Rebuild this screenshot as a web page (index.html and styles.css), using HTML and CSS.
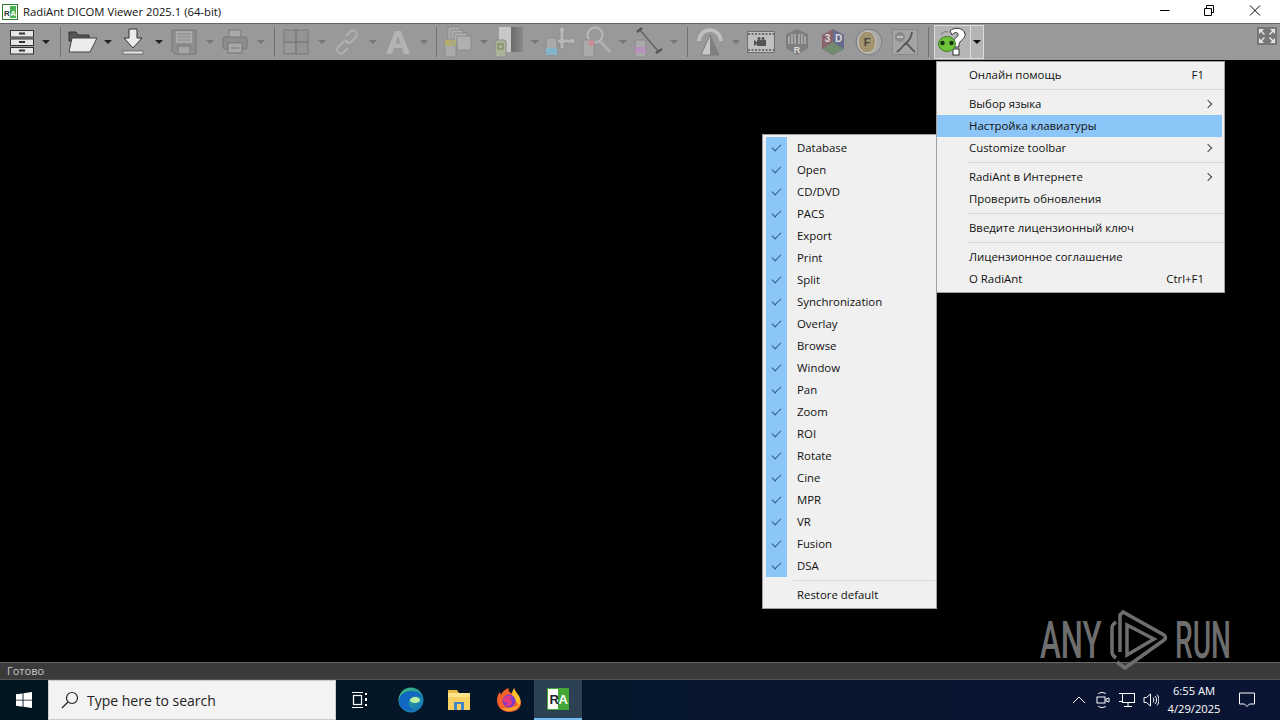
FILE: index.html
```html
<!DOCTYPE html>
<html lang="en">
<head>
    <meta charset="UTF-8">
    <title>RadiAnt DICOM Viewer 2025.1 (64-bit)</title>
    <link rel="stylesheet" href="styles.css">
</head>
<body>
    <div class="titlebar">
        <svg class="app-icon" width="16" height="16" viewBox="0 0 16 16">
            <rect x="0.5" y="0.5" width="15" height="15" fill="#fff" stroke="#2f7d32"/>
            <rect x="8" y="2" width="6" height="12" fill="#4caf50"/>
            <text x="2" y="11.5" class="ra-r">R</text>
            <text x="8.3" y="11.5" class="ra-a">A</text>
        </svg>
        <span class="title">RadiAnt DICOM Viewer 2025.1 (64-bit)</span>
        <div class="winbtns">
            <svg width="46" height="23" viewBox="0 0 46 23"><path d="M20 10.500h9.500" stroke="#000"/></svg>
            <svg width="46" height="23" viewBox="0 0 46 23"><path d="M20.500 8V5.500h7v7H25.500M18.500 8.500h7v7h-7z" fill="none" stroke="#000"/></svg>
            <svg width="46" height="23" viewBox="0 0 46 23"><path d="M18 5.500l10 10M28 5.500l-10 10" stroke="#000" fill="none"/></svg>
        </div>
    </div>

    <div class="toolbar">
        <button class="tool">
            <svg width="26" height="26" viewBox="0 0 26 26">
                <g fill="#e6e6e6" stroke="#333"><rect x="1.500" y="1.500" width="23" height="6.500"/><rect x="1.500" y="10" width="23" height="6.500"/><rect x="1.500" y="18.500" width="23" height="6.500"/></g>
                <path d="M10 4.500h6M10 13h6M10 21.500h6" stroke="#333" stroke-width="2"/>
            </svg>
        </button>
        <span class="arrow arrow-first"></span>
        <span class="sep sep-first"></span>

        <button class="tool">
            <svg width="32" height="26" viewBox="0 0 32 26">
                <path d="M3 3h7l2 3h11v6H3z" fill="#555" stroke="#333"/>
                <path d="M3 23l3-14h25l-7 14z" fill="#ececec" stroke="#444"/>
            </svg>
        </button>
        <span class="arrow"></span>
        <button class="tool">
            <svg width="22" height="28" viewBox="0 0 22 28">
                <path d="M7 1h8v9h5l-9 10-9-10h5z" fill="#ececec" stroke="#333"/>
                <rect x="1" y="23" width="20" height="3" fill="#e0e0e0" stroke="#444" stroke-width=".6"/>
            </svg>
        </button>
        <span class="arrow"></span>
        <button class="tool off">
            <svg width="26" height="26" viewBox="0 0 26 26">
                <path d="M1 1h24v24H4l-3-3z" fill="#8f8f8f" stroke="#777"/>
                <rect x="5" y="2" width="16" height="12" fill="#a9a9a9"/>
                <path d="M7 5h12M7 8h12M7 11h12" stroke="#888"/>
                <rect x="7" y="17" width="12" height="8" fill="#a5a5a5" stroke="#777"/>
            </svg>
        </button>
        <span class="arrow arrow-off"></span>
        <button class="tool off">
            <svg width="26" height="26" viewBox="0 0 26 26">
                <rect x="7" y="1" width="12" height="8" fill="#aaa" stroke="#777"/>
                <rect x="1" y="8" width="24" height="12" rx="2" fill="#8d8d8d" stroke="#777"/>
                <rect x="6" y="14" width="14" height="10" fill="#a8a8a8" stroke="#777"/>
                <path d="M9 19h8" stroke="#777"/>
            </svg>
        </button>
        <span class="arrow arrow-off"></span>
        <span class="sep"></span>

        <button class="tool off">
            <svg width="26" height="26" viewBox="0 0 26 26">
                <rect x="1" y="1" width="24" height="24" fill="#949494" stroke="#7a7a7a"/>
                <path d="M13 1v24M1 13h24" stroke="#6c6c6c"/>
                <path d="M2 16h10M2 19h10M2 22h10" stroke="#a4a4a4"/>
            </svg>
        </button>
        <span class="arrow arrow-off"></span>
        <button class="tool off">
            <svg width="26" height="26" viewBox="0 0 26 26" fill="none" stroke="#b0b0b0" stroke-width="2">
                <path d="M12 7l4-4a3.500 3.500 0 0 1 6 5l-5 5a3.500 3.500 0 0 1-5 0"/>
                <path d="M14 19l-4 4a3.500 3.500 0 0 1-6-5l5-5a3.500 3.500 0 0 1 5 0"/>
            </svg>
        </button>
        <span class="arrow arrow-off"></span>
        <button class="tool off">
            <svg width="26" height="26" viewBox="0 0 26 26">
                <path d="M1 25L10 2h6l9 23h-6l-2-6H9l-2 6zM10.500 14.500h5L13 7z" fill="#b3b3b3" fill-rule="evenodd"/>
            </svg>
        </button>
        <span class="arrow arrow-off"></span>
        <span class="sep sep-third"></span>

        <button class="tool off">
            <svg width="30" height="32" viewBox="0 0 30 32">
                <g fill="#b0b0b0" stroke="#8a8a8a"><rect x="5" y="1" width="12" height="14"/><rect x="8" y="4" width="12" height="14"/><rect x="11" y="7" width="13" height="14"/><rect x="14" y="10" width="14" height="14"/></g>
                <rect x="2" y="14" width="11" height="17" rx="2" fill="#aaa" stroke="#8a8a8a"/>
                <rect x="2" y="14" width="5.500" height="6" fill="#b5ab6c"/>
                <rect x="7.500" y="14" width="5.500" height="6" fill="#a9ad7a"/>
            </svg>
        </button>
        <span class="arrow arrow-off"></span>
        <button class="tool off">
            <svg width="30" height="32" viewBox="0 0 30 32">
                <defs><linearGradient id="lev"><stop offset="0" stop-color="#c8c8c8"/><stop offset=".5" stop-color="#c8c8c8"/><stop offset=".5" stop-color="#6c6c6c"/><stop offset="1" stop-color="#8a8a8a"/></linearGradient></defs>
                <rect x="5" y="1" width="24" height="25" fill="url(#lev)"/>
                <rect x="1" y="14" width="11" height="17" rx="2" fill="#aab49a" stroke="#8a8a8a"/>
                <rect x="4" y="18" width="5" height="5" fill="none" stroke="#70804f"/>
            </svg>
        </button>
        <span class="arrow arrow-off"></span>
        <button class="tool tool-pan off">
            <svg width="32" height="34" viewBox="0 0 32 34">
                <path d="M17 1l4 5h-2v8h7v-2l5 4-5 4v-2h-7v6h-4v-6h-3v-4h3V6h-2z" fill="#b8b8b8" stroke="#8e8e8e"/>
                <rect x="1" y="13" width="11" height="17" rx="2" fill="#aaa" stroke="#8a8a8a"/>
                <rect x="1" y="23" width="11" height="7" fill="#83b4c8"/>
            </svg>
        </button>
        <button class="tool off">
            <svg width="30" height="32" viewBox="0 0 30 32">
                <circle cx="13" cy="9" r="7.500" fill="none" stroke="#b8b8b8" stroke-width="2"/>
                <path d="M18 15l10 11" stroke="#b0b0b0" stroke-width="3"/>
                <rect x="1" y="14" width="11" height="17" rx="2" fill="#aaa" stroke="#8a8a8a"/>
                <rect x="6.500" y="14" width="5.500" height="6" fill="#c58f97"/>
            </svg>
        </button>
        <span class="arrow arrow-off"></span>
        <button class="tool off">
            <svg width="32" height="32" viewBox="0 0 32 32">
                <path d="M8 4l18 21" stroke="#666" stroke-width="1.600"/>
                <path d="M5 6l5-4M24 27l6-4" stroke="#555" stroke-width="2.400"/>
                <rect x="3" y="14" width="11" height="17" rx="2" fill="#aaa" stroke="#8a8a8a"/>
                <rect x="3" y="21" width="11" height="6" fill="#b590b8"/>
            </svg>
        </button>
        <span class="arrow arrow-off"></span>
        <span class="sep sep-fourth"></span>

        <button class="tool off">
            <svg width="28" height="30" viewBox="0 0 28 30">
                <path d="M3 14A11 11 0 0 1 25 14" fill="none" stroke="#c0c0c0" stroke-width="3.500"/>
                <path d="M14 8L5 28h18z" fill="#c8c8c8" stroke="#7d7d7d"/>
                <path d="M14 8v20h9z" fill="#7f7f7f"/>
            </svg>
        </button>
        <span class="arrow arrow-off"></span>
        <button class="tool off">
            <svg width="28" height="24" viewBox="0 0 28 24">
                <rect x="0.500" y="1.500" width="27" height="21" fill="#c0c0c0" stroke="#6f6f6f"/>
                <path d="M1 4h26M1 20h26" stroke="#6f6f6f" stroke-width="2" stroke-dasharray="2 1.500"/>
                <path d="M7 10l3 2v-2h9v6h-9v-2l-3 2z" fill="#555"/>
                <circle cx="12" cy="8.500" r="1.600" fill="#555"/><circle cx="16" cy="8.500" r="1.600" fill="#555"/>
            </svg>
        </button>
        <button class="tool off">
            <svg width="26" height="28" viewBox="0 0 26 28">
                <path d="M13 1l11 5v14l-11 7-11-7V6z" fill="#7e7e7e"/>
                <path d="M5 8v8M8 6v10M11 6v10M15 6v10M18 6v10M21 8v8" stroke="#b0b0b0" stroke-width="1.600"/>
                <text x="13" y="25" class="icon-r">R</text>
            </svg>
        </button>
        <button class="tool off">
            <svg width="26" height="28" viewBox="0 0 26 28">
                <path d="M13 1L2 7v14l11 6z" fill="#8a6468"/>
                <path d="M13 1l11 6v14l-11 6z" fill="#666a8c"/>
                <path d="M2 21l11-7 11 7-11 6z" fill="#718a70"/>
                <text x="7.500" y="14" class="icon-3d">3</text>
                <text x="18.500" y="14" class="icon-3d">D</text>
            </svg>
        </button>
        <button class="tool off">
            <svg width="28" height="28" viewBox="0 0 28 28">
                <circle cx="14" cy="14" r="13" fill="#a8a8a8" stroke="#7d7d7d"/>
                <ellipse cx="12" cy="14" rx="9" ry="11" fill="#a2946e" stroke="#c8c8c8"/>
                <text x="12" y="18" class="icon-f">F</text>
            </svg>
        </button>
        <button class="tool off">
            <svg width="26" height="26" viewBox="0 0 26 26">
                <rect x="0.500" y="0.500" width="25" height="25" fill="#a4a4a4" stroke="#8a8a8a"/>
                <circle cx="8" cy="8" r="5" fill="#8a8a8a"/>
                <path d="M5 8h6" stroke="#ccc" stroke-width="1.500"/>
                <path d="M20 3c-1 8-4 9-6 11-3 3-5 6-9 9M14 14c3 2 4 5 9 9" fill="none" stroke="#555" stroke-width="1.800"/>
            </svg>
        </button>
        <span class="sep sep-fifth"></span>

        <div class="help">
            <span class="help-icon">
                <svg width="32" height="30" viewBox="0 0 32 30">
                    <path d="M13 4c3-4 14-4 15 3 1 5-6 6-6 11v2h-6v-4c0-5 6-6 5-9-.5-2-4-2-6 1z" fill="#fff" stroke="#333"/>
                    <rect x="16" y="22" width="6" height="6" fill="#fff" stroke="#333"/>
                    <path d="M4 8c1-3 4-4 7-3" fill="none" stroke="#777"/>
                    <ellipse cx="10" cy="17" rx="8.500" ry="7.500" fill="#6fc23a" stroke="#3f7d22"/>
                    <circle cx="5.500" cy="16" r="2.200" fill="#16330d"/>
                    <circle cx="14.500" cy="16" r="2.200" fill="#16330d"/>
                </svg>
            </span>
            <span class="help-arrow"></span>
        </div>

        <button class="fullscreen">
            <svg width="20" height="18" viewBox="0 0 20 18">
                <rect width="20" height="18" fill="#777"/>
                <path d="M2 2h5L5 4l3 3-1 1-3-3-2 2zM18 2v5l-2-2-3 3-1-1 3-3-2-2zM2 16v-5l2 2 3-3 1 1-3 3 2 2zM18 16h-5l2-2-3-3 1-1 3 3 2-2z" fill="#e4e4e4"/>
            </svg>
        </button>
    </div>

    <div class="viewport">
        <ul class="menu menu-toolbar">
            <li class="check">Database</li>
            <li class="check">Open</li>
            <li class="check">CD/DVD</li>
            <li class="check">PACS</li>
            <li class="check">Export</li>
            <li class="check">Print</li>
            <li class="check">Split</li>
            <li class="check">Synchronization</li>
            <li class="check">Overlay</li>
            <li class="check">Browse</li>
            <li class="check">Window</li>
            <li class="check">Pan</li>
            <li class="check">Zoom</li>
            <li class="check">ROI</li>
            <li class="check">Rotate</li>
            <li class="check">Cine</li>
            <li class="check">MPR</li>
            <li class="check">VR</li>
            <li class="check">Fusion</li>
            <li class="check">DSA</li>
            <li class="divider"></li>
            <li>Restore default</li>
        </ul>

        <ul class="menu menu-help">
            <li>Онлайн помощь<span class="key">F1</span></li>
            <li class="divider"></li>
            <li class="sub">Выбор языка</li>
            <li class="active">Настройка клавиатуры</li>
            <li class="sub">Customize toolbar</li>
            <li class="divider"></li>
            <li class="sub">RadiAnt в Интернете</li>
            <li>Проверить обновления</li>
            <li class="divider"></li>
            <li>Введите лицензионный ключ</li>
            <li class="divider"></li>
            <li>Лицензионное соглашение</li>
            <li>О RadiAnt<span class="key">Ctrl+F1</span></li>
        </ul>

        <div class="watermark">
            <span class="wm-text">ANY</span>
            <svg class="wm-logo" width="60" height="62" viewBox="0 0 60 62" fill="none" stroke="#6e6e6e" stroke-width="3.500">
                <path d="M8 13c-3 2-4 4-4 6v24c0 3 1 4 4 6"/>
                <path d="M12 43V6l3-3 41 23q3 3 0 5L17 59l-8-6"/>
                <path d="M19 16l27 14-27 16z"/>
            </svg>
            <span class="wm-text wm-run">RUN</span>
        </div>
    </div>

    <div class="statusbar">Готово</div>

    <div class="taskbar">
        <div class="start">
            <svg width="16" height="16" viewBox="0 0 18 18" fill="#fff"><path d="M0 2.600l7.400-1v7H0zM8.400 1.400L18 0v8.600H8.400zM0 9.500h7.400v7L0 15.400zM8.400 9.500H18V18l-9.600-1.400z"/></svg>
        </div>
        <div class="search">
            <svg width="18" height="18" viewBox="0 0 18 18" fill="none" stroke="#222" stroke-width="1.200"><circle cx="11" cy="7" r="5.500"/><path d="M7 11l-6 6"/></svg>
            <span>Type here to search</span>
        </div>
        <div class="task task-view">
            <svg width="16" height="18" viewBox="0 0 16 18" fill="none" stroke="#fff" stroke-width="1.200"><path d="M0 1.500h11M0 16.500h11"/><rect x="1.500" y="4.500" width="8" height="9"/><path d="M14 2v2M14 7v3M14 13v2" stroke-width="2"/></svg>
        </div>
        <div class="task">
            <svg width="26" height="26" viewBox="0 0 26 26">
                <defs><linearGradient id="edge" x1="0" y1="0" x2="1" y2="1"><stop offset="0" stop-color="#3ec47a"/><stop offset="1" stop-color="#0d6bc4"/></linearGradient></defs>
                <circle cx="13" cy="13" r="12.500" fill="url(#edge)"/>
                <path d="M1 15C1 6 8 4 14 4c6 0 10 4 11 8-3-3-9-4-13 0-3 3-1 9 4 11-2 2-15 1-15-8z" fill="#1268c0"/>
                <ellipse cx="17" cy="13" rx="5" ry="3" fill="#bdf0a5"/>
            </svg>
        </div>
        <div class="task">
            <svg width="24" height="22" viewBox="0 0 24 22">
                <path d="M1 1h9l2 3h11v17H1z" fill="#e9b949"/>
                <rect x="1" y="4" width="22" height="4" fill="#fde48a"/>
                <rect x="1" y="8" width="22" height="13" fill="#f8d165"/>
                <rect x="7" y="13" width="10" height="8" fill="#3f86c9"/>
                <rect x="10" y="15" width="4" height="6" fill="#f8d165"/>
            </svg>
        </div>
        <div class="task task-fox">
            <svg width="26" height="26" viewBox="0 0 26 26">
                <path d="M13 25C6 25 1 20 1 13c0-3 1-6 3-8l1 3c1-3 4-6 8-7-1 2 0 4 2 5 4 1 7 3 8 5 1 1 2 3 2 5 0 5-5 9-12 9z" fill="#f4622c"/>
                <path d="M18 1c1 3 3 5 5 8 2 3 2 7 0 10-2-4-6-8-7-12 0-2 1-4 2-6z" fill="#ffc02e"/>
                <path d="M6 21c2 3 8 4 12 2 3-1 5-4 6-7-3 4-11 6-18 5z" fill="#ffa22e"/>
                <circle cx="13" cy="14" r="6.500" fill="#7d3bc7"/>
                <path d="M7 12c2-3 6-4 9-2l-3 2c2 0 4 2 3 4-1 3-5 4-8 2 2 0 4-1 4-2-3 0-5-2-5-4z" fill="#e4387f"/>
            </svg>
        </div>
        <div class="task task-active">
            <svg width="22" height="22" viewBox="0 0 22 22">
                <rect width="22" height="22" fill="#fff"/>
                <rect x="11" y="0" width="11" height="22" fill="#43a838"/>
                <rect width="22" height="22" fill="none" stroke="#43a838" stroke-width="2"/>
                <text x="2.500" y="16" class="ra-big">R</text>
                <text x="11.500" y="16" class="ra-big ra-big-a">A</text>
            </svg>
        </div>

        <div class="tray">
            <svg width="16" height="8" viewBox="0 0 14 8" fill="none" stroke="#fff"><path d="M1 7l6-6 6 6"/></svg>
            <svg width="16" height="18" viewBox="0 0 14 18" fill="none" stroke="#fff"><path d="M2 3c2-2 6-2 8 0M2 15c2 2 6 2 8 0"/><rect x="1" y="6" width="8" height="6"/><path d="M10 8l3-1v4l-3-1z"/></svg>
            <svg width="16" height="14" viewBox="0 0 16 14" fill="none" stroke="#fff"><rect x="3.500" y=".5" width="12" height="9"/><path d="M0 .5h3.500v8H0M9 10v3M5 13.500h8"/></svg>
            <svg width="16" height="14" viewBox="0 0 16 14" fill="none" stroke="#fff"><path d="M1 4.500h2.500l4-3.500v12l-4-3.500H1zM10 4.500c1 1.500 1 3.500 0 5M12 3c2 2 2 6 0 8M14 1.500c2.500 3 2.500 8 0 11"/></svg>
        </div>
        <div class="clock">
            <span>6:55 AM</span>
            <span>4/29/2025</span>
        </div>
        <div class="notify">
            <svg width="16" height="16" viewBox="0 0 16 16" fill="none" stroke="#fff"><path d="M.5 1h15v11h-5l-2.500 2.500L5.500 12h-5z"/></svg>
        </div>
    </div>
</body>
</html>
```

FILE: styles.css
```css
* {
    box-sizing: border-box;
}
body {
    margin: 0;
    height: 720px;
    overflow: hidden;
    display: flex;
    flex-direction: column;
    font-family: "Open Sans", "Noto Sans", sans-serif;
    background: #000;
}

/* title bar */
.titlebar {
    height: 23px;
    flex: none;
    background: #fff;
    display: flex;
    align-items: center;
    padding-left: 2px;
}
.app-icon {
    flex: none;
}
.ra-r, .ra-a {
    font: bold 8px "Liberation Sans", sans-serif;
}
.ra-r {
    fill: #333;
}
.ra-a {
    fill: #fff;
}
.title {
    margin-left: 5px;
    font-size: 11.300px;
    color: #111;
}
.winbtns {
    margin-left: auto;
    margin-right: 2px;
    display: flex;
}

/* toolbar */
.toolbar {
    height: 37px;
    flex: none;
    background: #999;
    border-top: 1px solid #666;
    display: flex;
    align-items: center;
    padding-left: 4px;
}
.tool {
    width: 36px;
    height: 36px;
    flex: none;
    border: 0;
    padding: 0;
    background: none;
    display: flex;
    align-items: center;
    justify-content: center;
}
.tool-pan {
    width: 37px;
}
.arrow {
    width: 15px;
    flex: none;
    display: flex;
    justify-content: center;
}
.arrow::before {
    content: "";
    border-style: solid;
    border-width: 4px 4px 0;
    border-color: #222 transparent transparent;
}
.arrow-first {
    width: 12px;
}
.arrow-off::before {
    border-top-color: #777;
}
.sep {
    width: 1px;
    height: 30px;
    flex: none;
    background: #6f6f6f;
    margin: 0 3px 0 6px;
}
.sep-first {
    margin: 0 3px 0 8px;
}
.sep-third {
    margin: 0 3px 0 5px;
}
.sep-fourth {
    margin: 0 4px 0 6px;
}
.sep-fifth {
    margin: 0 5px 0 5px;
}
.help {
    height: 34px;
    width: 50px;
    flex: none;
    display: flex;
    border: 1px solid #ddd;
    background: #b5b5b5;
}
.help-icon {
    width: 36px;
    display: flex;
    align-items: center;
    justify-content: center;
    border-right: 1px solid #ddd;
}
.help-arrow {
    flex: 1;
    display: flex;
    align-items: center;
    justify-content: center;
}
.help-arrow::before {
    content: "";
    border-style: solid;
    border-width: 4px 4px 0;
    border-color: #111 transparent transparent;
}
.fullscreen {
    margin-left: auto;
    margin-right: 3px;
    margin-bottom: 13px;
    border: 0;
    padding: 0;
    background: none;
    display: flex;
}

/* black image area */
.viewport {
    flex: 1;
    position: relative;
    background: #000;
}

/* popup menus */
.menu {
    position: absolute;
    margin: 0;
    padding: 0;
    list-style: none;
    background: #f0f0f0;
    border: 1px solid #a0a0a0;
    font-size: 11.400px;
    color: #111;
    z-index: 2;
}
.menu li {
    height: 22px;
    line-height: 22px;
    position: relative;
    display: flex;
    justify-content: space-between;
}
.menu .divider {
    height: 7px;
}
.menu .divider::after {
    content: "";
    position: absolute;
    top: 3px;
    right: 0;
    height: 1px;
    background: #d7d7d7;
}
.menu-toolbar {
    left: 762px;
    top: 74px;
    width: 175px;
    height: 475px;
    padding: 2px 1px 0;
}
.menu-toolbar li {
    padding-left: 33px;
}
.menu-toolbar .divider::after {
    left: 29px;
}
.check::before {
    content: "";
    position: absolute;
    left: 2px;
    top: 0;
    width: 21px;
    height: 22px;
    background: #8cc5f8;
}
.check::after {
    content: "";
    position: absolute;
    left: 8px;
    top: 7px;
    width: 8px;
    height: 4px;
    border-left: 1.500px solid #2d5b85;
    border-bottom: 1.500px solid #2d5b85;
    transform: rotate(-45deg);
}
.menu-help {
    left: 936px;
    top: 1px;
    width: 289px;
    height: 232px;
    padding-top: 2px;
}
.menu-help li {
    padding: 0 20px 0 32px;
}
.menu-help .divider::after {
    left: 30px;
}
.menu-help .active {
    background: #8cc5f8;
    margin-right: 2px;
}
.sub::after {
    content: "";
    position: absolute;
    right: 13px;
    top: 8px;
    width: 5px;
    height: 5px;
    border-top: 1px solid #444;
    border-right: 1px solid #444;
    transform: rotate(45deg);
}

/* watermark */
.watermark {
    position: absolute;
    left: 1040px;
    top: 549px;
    display: flex;
    align-items: center;
    gap: 2px;
    z-index: 3;
}
.wm-text {
    font: 500 52px Roboto, sans-serif;
    color: #6e6e6e;
    display: inline-block;
    width: 66px;
    transform: scaleX(.6);
    transform-origin: left;
}
.wm-run {
    margin-left: 5px;
    width: 58px;
    transform: scaleX(.54);
}
.wm-logo {
    flex: none;
}

/* status bar */
.statusbar {
    height: 18px;
    flex: none;
    background: #3b3b3b;
    border-top: 1px solid #666;
    border-bottom: 1px solid #555;
    color: #c8c8c8;
    font-size: 11px;
    line-height: 16px;
    padding-left: 7px;
}

/* windows taskbar */
.taskbar {
    height: 40px;
    flex: none;
    background: linear-gradient(90deg, #02161f, #06162c 50%, #0a1434);
    display: flex;
    align-items: stretch;
}
.start {
    width: 48px;
    flex: none;
    display: flex;
    align-items: center;
    justify-content: center;
}
.search {
    width: 288px;
    flex: none;
    background: #f3f3f3;
    border: 1px solid #ccc;
    display: flex;
    align-items: center;
    padding-left: 12px;
    gap: 8px;
    font-size: 14px;
    color: #222;
}
.task {
    width: 48px;
    flex: none;
    display: flex;
    align-items: center;
    justify-content: center;
}
.task-view {
    margin-right: 3px;
}
.task-fox {
    margin-left: 2px;
}
.task-active {
    margin-left: 1px;
    background: #2c4152;
    border-bottom: 2px solid #76b9ed;
}
.ra-big {
    font: bold 13px "Liberation Sans", sans-serif;
    fill: #223;
}
.ra-big-a {
    fill: #fff;
}
.icon-r, .icon-f {
    font: bold 9px "Liberation Sans", sans-serif;
    text-anchor: middle;
    fill: #ddd;
}
.icon-f {
    font-size: 11px;
    fill: #444;
}
.icon-3d {
    font: bold 10px "Liberation Sans", sans-serif;
    text-anchor: middle;
    fill: #ddd;
}
.tray {
    margin-left: auto;
    display: flex;
    align-items: center;
    gap: 8px;
}
.clock {
    width: 70px;
    display: flex;
    flex-direction: column;
    align-items: center;
    justify-content: center;
    gap: 2px;
    color: #fff;
    font-size: 11.200px;
    line-height: 16px;
}
.notify {
    width: 36px;
    margin-right: 15px;
    display: flex;
    align-items: center;
    justify-content: center;
}
```
